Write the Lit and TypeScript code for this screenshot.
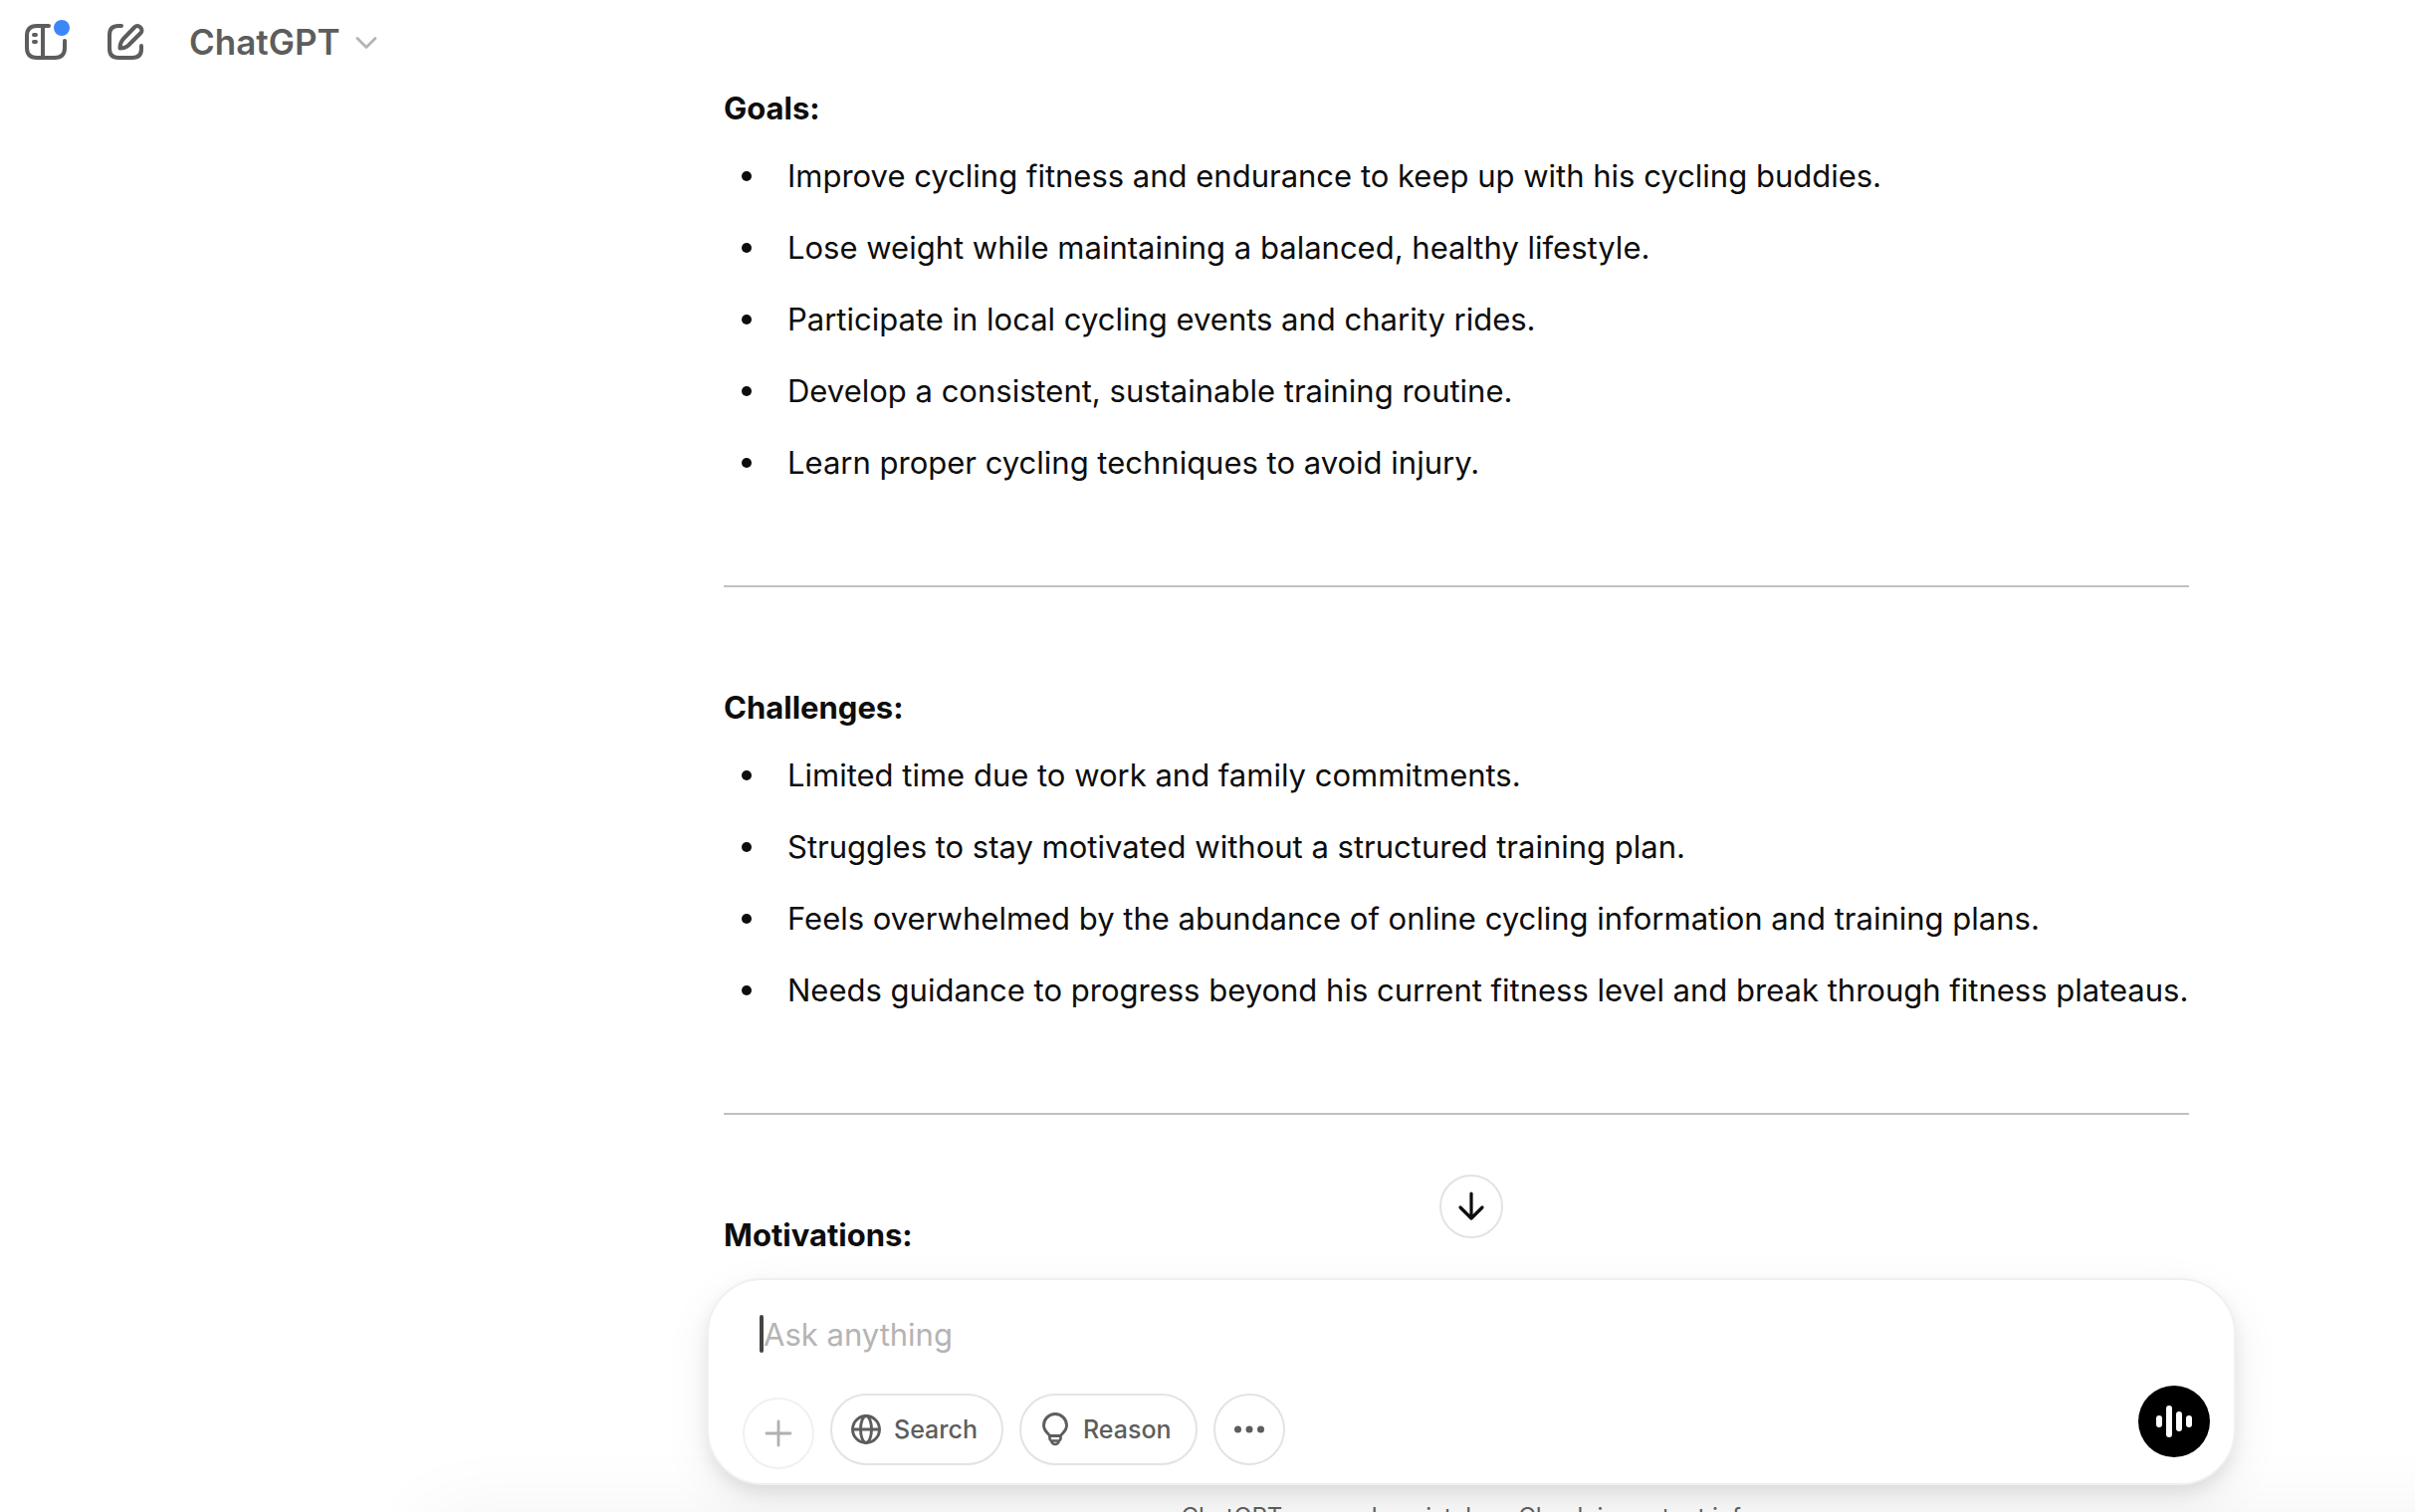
import { LitElement, html, css, svg } from "lit";
import { customElement } from "lit/decorators.js";

interface Section {
  title: string;
  items: string[];
}

const SECTIONS: Section[] = [
  {
    title: "Goals:",
    items: [
      "Improve cycling fitness and endurance to keep up with his cycling buddies.",
      "Lose weight while maintaining a balanced, healthy lifestyle.",
      "Participate in local cycling events and charity rides.",
      "Develop a consistent, sustainable training routine.",
      "Learn proper cycling techniques to avoid injury.",
    ],
  },
  {
    title: "Challenges:",
    items: [
      "Limited time due to work and family commitments.",
      "Struggles to stay motivated without a structured training plan.",
      "Feels overwhelmed by the abundance of online cycling information and training plans.",
      "Needs guidance to progress beyond his current fitness level and break through fitness plateaus.",
    ],
  },
  { title: "Motivations:", items: [] },
];

const icon = (w: number, h: number, body: unknown) => html`
  <svg width=${w} height=${h} viewBox="0 0 ${w} ${h}" fill="none" stroke="currentColor"
    stroke-linecap="round" stroke-linejoin="round" aria-hidden="true">${body}</svg>`;

const sidebarIcon = icon(48, 48, svg`
  <path d="M27 8H15Q5 8 5 18V30Q5 40 15 40H33Q43 40 43 30V23" stroke-width="4"/>
  <path d="M21 8V40" stroke-width="4"/>
  <path d="M12 17H14M12 24H14" stroke-width="4"/>
  <circle cx="40" cy="10" r="8" fill="#3c87f7" stroke="none"/>`);

const composeIcon = icon(48, 48, svg`
  <path d="M20 8H17Q8 8 8 17V31Q8 40 17 40H31Q40 40 40 31V28" stroke-width="4"/>
  <path d="M33 9.500Q36 6.500 39 9.500Q42 12.500 39 15.500L26.500 28Q23.500 30.500 18.500 30.500Q18.500 25 21.500 21.500Z" stroke-width="4"/>`);

const chevronIcon = icon(24, 16, svg`<path d="M3 4.500L12 13.500L21 4.500" stroke-width="2.800"/>`);
const arrowIcon = icon(32, 32, svg`<path d="M16 3V28M5 17L16 28L27 17" stroke-width="3.200"/>`);
const plusIcon = icon(32, 32, svg`<path d="M16 4V28M4 16H28" stroke-width="2.800"/>`);

const globeIcon = icon(36, 36, svg`
  <circle cx="18" cy="18" r="13.500" stroke-width="2.900"/>
  <ellipse cx="18" cy="18" rx="5.500" ry="13.500" stroke-width="2.900"/>
  <path d="M5 18H31" stroke-width="2.900"/>`);

const bulbIcon = icon(36, 36, svg`
  <path d="M12.500 24.500C12 22.500 6.500 20 6.500 14A11.500 11.500 0 0 1 29.500 14C29.500 20 24 22.500 23.500 24.500Z" stroke-width="2.900"/>
  <path d="M12.500 24.500V27Q12.500 29 14 29.500Q15 33 18 33Q21 33 22 29.500Q23.500 29 23.500 27V24.500M14 29.500H22" stroke-width="2.700"/>`);

const dotsIcon = icon(36, 36, svg`
  <g fill="currentColor" stroke="none">
    <circle cx="6.500" cy="18" r="3.500"/><circle cx="18" cy="18" r="3.500"/><circle cx="29.500" cy="18" r="3.500"/>
  </g>`);

const voiceIcon = icon(40, 40, svg`
  <path d="M5 17V23M15 7V33M25 13V27M35 17V23" stroke-width="6"/>`);

@customElement("app-root")
export class AppRoot extends LitElement {
  static styles = css`
    :host {
      display: block;
      font-family: Inter, "Liberation Sans", sans-serif;
      color: #0d0d0d;
    }
    * { box-sizing: border-box; }
    svg { display: block; flex: none; overflow: visible; }
    button {
      display: flex;
      align-items: center;
      justify-content: center;
      padding: 0;
      border: 0;
      background: none;
      font: inherit;
      color: inherit;
      cursor: pointer;
    }
    .page {
      position: relative;
      display: flex;
      flex-direction: column;
      height: 100vh;
      overflow: hidden;
      background: #fff;
    }
    /* Soft glow that rises from below the bottom edge */
    .page::before {
      content: "";
      position: absolute;
      top: 100%;
      left: 430px;
      right: -200px;
      height: 120px;
      box-shadow: 0 0 80px rgba(0, 0, 0, 0.05);
    }
    .bar {
      flex: none;
      display: flex;
      align-items: center;
      gap: 32px;
      height: 81px;
      padding: 3px 22px 0;
      color: #5d5d5d;
    }
    .model {
      gap: 14px;
      margin-left: 8px;
      font-size: 35px;
      font-weight: 600;
    }
    .model svg { color: #b4b4b4; }
    .thread {
      position: relative;
      flex: 1;
      min-height: 0;
      padding-left: 530px;
    }
    .scroll {
      height: 100%;
      overflow: hidden;
    }
    .message {
      width: min(1536px, 100% - 48px);
      margin: 0 auto;
      padding: 0 47px 0 17px;
      font-size: 31px;
      line-height: 56px;
    }
    h3 {
      margin: 0 0 12px;
      font-size: 31px;
      font-weight: 700;
    }
    ul {
      display: flex;
      flex-direction: column;
      gap: 16px;
      margin: 0 -32px 0 0;
      padding: 0;
      list-style: none;
    }
    li {
      display: flex;
      align-items: center;
      gap: 36px;
      padding-left: 18px;
    }
    li::before {
      content: "";
      flex: none;
      width: 10px;
      height: 10px;
      border-radius: 50%;
      background: #0d0d0d;
    }
    hr {
      height: 2px;
      margin: 95px 0 93px;
      border: 0;
      background: #c0c0c0;
    }
    .down {
      position: absolute;
      bottom: 40px;
      left: calc(50% + 265px - 32px);
      width: 64px;
      height: 64px;
      border: 2px solid #e3e3e3;
      border-radius: 50%;
      background: #fff;
    }
    .dock {
      display: flex;
      flex-direction: column;
      align-items: center;
      flex: 0 0 235px;
      min-height: 0;
      padding-left: 530px;
    }
    .composer {
      position: relative;
      flex: none;
      display: flex;
      flex-direction: column;
      justify-content: space-between;
      width: min(1536px, 100% - 48px);
      height: 208px;
      padding: 34px 24px 14px 34px;
      border: 2px solid #f0f0f0;
      border-radius: 56px;
      background: #fff;
      box-shadow: 0 8px 16px rgba(0, 0, 0, 0.08), 0 16px 48px rgba(0, 0, 0, 0.07);
    }
    .field {
      display: flex;
      align-items: center;
      height: 40px;
      padding-left: 17px;
    }
    .caret {
      width: 4px;
      height: 38px;
      border-radius: 2px;
      background: #444;
    }
    input {
      flex: 1;
      min-width: 0;
      padding: 0;
      border: 0;
      outline: 0;
      background: none;
      font: inherit;
      font-size: 31px;
      color: #0d0d0d;
    }
    input::placeholder { color: #b4b4b4; opacity: 1; }
    .tools {
      display: flex;
      align-items: flex-start;
      gap: 16px;
      height: 84px;
      padding-top: 8px;
    }
    .tool {
      height: 72px;
      padding: 0 24px 0 16px;
      gap: 10px;
      border: 2px solid #e3e3e3;
      border-radius: 36px;
      font-size: 25px;
      font-weight: 500;
      color: #5d5d5d;
    }
    .round {
      width: 72px;
      padding: 0;
    }
    .add {
      margin-top: 4px;
      border-color: #f1f1f1;
      color: #b0b0b0;
    }
    .voice {
      width: 72px;
      height: 72px;
      margin: -8px 0 0 auto;
      border-radius: 50%;
      background: #000;
      color: #fff;
    }
    .note {
      flex: none;
      position: relative;
      margin: 16px 0 0;
      font-size: 24px;
      line-height: 32px;
      color: #5d5d5d;
    }
  `;

  private renderSection(s: Section, i: number) {
    return html`
      ${i > 0 ? html`<hr />` : ""}
      <h3>${s.title}</h3>
      ${s.items.length ? html`<ul>${s.items.map((t) => html`<li>${t}</li>`)}</ul>` : ""}
    `;
  }

  render() {
    return html`
      <div class="page">
        <header class="bar">
          <button aria-label="Open sidebar">${sidebarIcon}</button>
          <button aria-label="New chat">${composeIcon}</button>
          <button class="model">ChatGPT ${chevronIcon}</button>
        </header>
        <main class="thread">
          <div class="scroll">
            <article class="message">${SECTIONS.map((s, i) => this.renderSection(s, i))}</article>
          </div>
          <button class="down" aria-label="Scroll to bottom">${arrowIcon}</button>
        </main>
        <footer class="dock">
          <form class="composer" @submit=${(e: Event) => e.preventDefault()}>
            <div class="field">
              <span class="caret"></span>
              <input type="text" placeholder="Ask anything" aria-label="Ask anything" />
            </div>
            <div class="tools">
              <button type="button" class="tool round add" aria-label="Add">${plusIcon}</button>
              <button type="button" class="tool">${globeIcon}Search</button>
              <button type="button" class="tool">${bulbIcon}Reason</button>
              <button type="button" class="tool round" aria-label="More">${dotsIcon}</button>
              <button type="button" class="voice" aria-label="Voice mode">${voiceIcon}</button>
            </div>
          </form>
          <p class="note">ChatGPT can make mistakes. Check important info.</p>
        </footer>
      </div>
    `;
  }
}
